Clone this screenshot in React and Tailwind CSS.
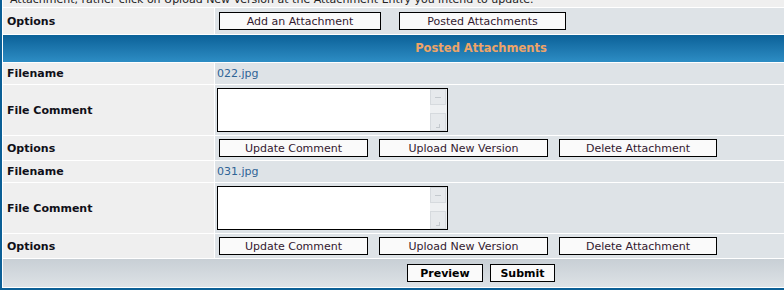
import React from 'react';

const font = { fontFamily: '"DejaVu Sans", Verdana, sans-serif' };

// grey Windows-style form button with a thin black frame
function Btn({ children, w, bold }) {
  return (
    <button
      type="button"
      className={`h-[18px] border border-black bg-[#fafafa] pt-px text-[11px] leading-[15px] text-[#33192f] ${bold ? 'font-bold text-black' : ''} ${w}`}
    >
      {children}
    </button>
  );
}

// disabled textarea look with the little scrollbar on its right side
function CommentBox() {
  return (
    <div className="flex h-[44px] w-[231px] border border-black bg-white">
      <textarea className="flex-1 resize-none bg-white outline-none" readOnly />
      <div className="flex w-[17px] flex-col justify-between bg-[#eef0f2] pr-px">
        <div className="flex h-[16px] items-center justify-center border border-[#d6dade] bg-[#e6e9ec]">
          <div className="h-px w-[6px] bg-[#c4c9ce]" />
        </div>
        <div className="flex h-[18px] items-end justify-center border border-[#d6dade] bg-[#e6e9ec] pb-[2px]">
          <div className="h-[4px] w-[4px] border-r border-b border-[#c4c9ce]" />
        </div>
      </div>
    </div>
  );
}

function Row({ label, h, children }) {
  return (
    <div className={`grid grid-cols-[211px_1fr] gap-px ${h}`}>
      <div className="flex items-center bg-[#efefef] pl-[4px] pt-[2px] text-[11px] font-bold text-[#101018]">{label}</div>
      <div className="flex items-center bg-[#dee3e7] pl-[2px]">{children}</div>
    </div>
  );
}

function Attachment({ file }) {
  return (
    <>
      <Row label="Filename" h="h-[21px]">
        <span className="pt-[2px] text-[11px] text-[#2f6496]">{file}</span>
      </Row>
      <Row label="File Comment" h="h-[50px]">
        <CommentBox />
      </Row>
      <Row label="Options" h="h-[24px]">
        <div className="ml-[2px] flex gap-[11px]">
          <Btn w="w-[149px]">Update Comment</Btn>
          <Btn w="w-[169px]">Upload New Version</Btn>
          <Btn w="w-[158px]">Delete Attachment</Btn>
        </div>
      </Row>
    </>
  );
}

export default function App() {
  return (
    <div className="h-[294px] w-[784px] overflow-hidden bg-white" style={font}>
      <div className="-mt-[10px] flex w-[962px] flex-col gap-px border-2 border-[#0b5f96] bg-white p-px">
        {/* explanation text, mostly scrolled off the top */}
        <div className="h-[14px] bg-[#efefef] pl-[7px] text-[11px] leading-[14px] text-[#222]">
          Attachment, rather click on Upload New Version at the Attachment Entry you intend to update.
        </div>

        <Row label="Options" h="h-[26px]">
          <div className="ml-[2px] flex gap-[18px]">
            <Btn w="w-[162px]">Add an Attachment</Btn>
            <Btn w="w-[167px]">Posted Attachments</Btn>
          </div>
        </Row>

        <div className="flex h-[27px] items-center justify-center bg-gradient-to-b from-[#0a6198] to-[#2d8dc4] pt-px text-[11.5px] font-bold text-[#eea468]">
          Posted Attachments
        </div>

        <Attachment file="022.jpg" />
        <Attachment file="031.jpg" />

        <div className="flex h-[28px] items-center justify-center gap-[7px] bg-gradient-to-b from-[#c8cfd5] to-[#dde2e6]">
          <Btn w="w-[76px]" bold>Preview</Btn>
          <Btn w="w-[65px]" bold>Submit</Btn>
        </div>
      </div>
    </div>
  );
}
